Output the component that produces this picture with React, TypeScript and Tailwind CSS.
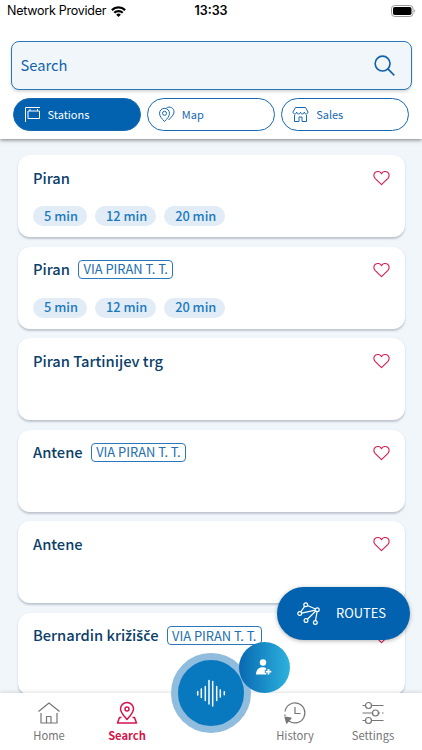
import React, { useState } from "react";
import clsx from "clsx";

type Station = {
  id: number;
  name: string;
  via?: string;
  arrivals?: string[];
};

const stations: Station[] = [
  { id: 1, name: "Piran", arrivals: ["5 min", "12 min", "20 min"] },
  {
    id: 2,
    name: "Piran",
    via: "VIA PIRAN T. T.",
    arrivals: ["5 min", "12 min", "20 min"],
  },
  { id: 3, name: "Piran Tartinijev trg" },
  { id: 4, name: "Antene", via: "VIA PIRAN T. T." },
  { id: 5, name: "Antene" },
  { id: 6, name: "Bernardin križišče", via: "VIA PIRAN T. T." },
];

function Icon({
  children,
  className,
  viewBox = "0 0 24 24",
  strokeWidth = 1.2,
}: {
  children: React.ReactNode;
  className?: string;
  viewBox?: string;
  strokeWidth?: number;
}) {
  return (
    <svg
      className={clsx("shrink-0", className)}
      viewBox={viewBox}
      fill="none"
      stroke="currentColor"
      strokeWidth={strokeWidth}
      strokeLinejoin="round"
    >
      {children}
    </svg>
  );
}

function StatusBar() {
  return (
    <div className="flex h-[22px] items-center px-[7px] font-['Inter',sans-serif] text-[12.5px] leading-[22px] text-black">
      <div className="flex flex-1 items-center gap-[5px]">
        <span className="whitespace-nowrap tracking-[-0.25px]">
          Network Provider
        </span>
        <svg className="h-[11px] w-[15px]" viewBox="0 0 15 11">
          <g fill="none" stroke="#000" strokeWidth="2.3">
            <path d="M0.9 4.1a9.4 9.4 0 0 1 13.2 0" />
            <path d="M3.3 6.8a6 6 0 0 1 8.4 0" />
          </g>
          <path d="M7.5 10.9 5.2 8.7a3.3 3.3 0 0 1 4.6 0z" />
        </svg>
      </div>
      <span className="font-semibold">13:33</span>
      <div className="flex flex-1 justify-end">
        <svg className="-mr-[1px] h-[12px] w-[25px]" viewBox="0 0 25 12">
          <rect x="0.5" y="0.5" width="21.5" height="11" rx="3.2" fill="none" stroke="#9a9a9a" />
          <rect x="2" y="2" width="18.5" height="8" rx="1.8" />
          <path d="M23.3 4.2c1.3.6 1.3 3 0 3.6z" fill="#9a9a9a" />
        </svg>
      </div>
    </div>
  );
}

function StationsIcon() {
  return (
    <Icon className="h-[17px] w-[17px]" viewBox="0 0 17 17" strokeWidth={1}>
      <path d="M1.5 16V1.5H16" />
      <path d="M4 5h11.5v7.5H4zM6 3v2M13.5 3v2" />
    </Icon>
  );
}

function MapIcon() {
  return (
    <Icon className="h-[17px] w-[17px]" viewBox="0 0 17 17" strokeWidth={1}>
      <path d="M6.5 15.5C4 12.8 1.500 10.300 1.500 7.300a5 5 0 0 1 10 0c0 3-2.500 5.500-5 8.200z" />
      <circle cx="6.5" cy="7.3" r="2" />
      <path d="M8.500 2c3-2.200 7.500-.3 7.500 3.800 0 2.800-2.500 5.300-5.500 8.200" />
    </Icon>
  );
}

function SalesIcon() {
  return (
    <Icon className="h-[17px] w-[17px]" viewBox="0 0 17 17" strokeWidth={1}>
      <path d="M3.5 1.5h10L16 6c0 2.600-3.700 2.600-3.700 0 0 2.600-3.800 2.600-3.800 0 0 2.600-3.800 2.600-3.800 0C4.700 8.600 1 8.600 1 6z" />
      <path d="M2.5 9v6.5H7V11h3v4.5h4.5V9" />
    </Icon>
  );
}

function StationName({ name }: { name: string }) {
  return (
    <span className="whitespace-pre text-[14.7px] font-medium text-[#0a4069]">
      {name.split(/([čšž]+)/).map((part, i) =>
        i % 2 ? (
          <span key={i} className="font-['Noto_Sans',sans-serif] text-[14px] font-semibold">
            {part}
          </span>
        ) : (
          part
        )
      )}
    </span>
  );
}

function StationCard({ station }: { station: Station }) {
  return (
    <div className="h-[82px] shrink-0 rounded-[12px] bg-white px-[15px] pt-[13px] shadow-[0_1.5px_2px_rgba(60,75,95,0.28)]">
      <div className="flex h-5 items-center">
        <StationName name={station.name} />
        {station.via && (
          <span className="ml-2 flex h-[19px] items-center rounded-[4px] border border-[#2a78ba] px-[4.5px] text-[12.9px] text-[#236fb2]">
            {station.via}
          </span>
        )}
        <Icon
          className="ml-auto h-4 w-[17px] text-[#d61f50]"
          viewBox="0 0 18 16"
        >
          <path d="M9 15 2.200 8.300C.3 6.300.6 3.300 2.500 1.900 4.500.5 7.500.9 9 3.400 10.500.9 13.500.5 15.500 1.900c1.900 1.400 2.200 4.400.3 6.400z" />
        </Icon>
      </div>
      {station.arrivals && (
        <div className="mt-[18px] flex gap-2">
          {station.arrivals.map((time) => (
            <span
              key={time}
              className="flex h-5 items-center rounded-full bg-[#e1ecf7] pl-[11px] pr-[9px] text-[12.8px] font-medium text-[#1a79bd]"
            >
              {time}
            </span>
          ))}
        </div>
      )}
    </div>
  );
}

function NavItem({
  label,
  active,
  children,
}: {
  label: string;
  active?: boolean;
  children: React.ReactNode;
}) {
  return (
    <button
      className={clsx(
        "flex w-[78px] flex-col items-center pt-2",
        active ? "font-bold text-[#d3164b]" : "text-[#757575]"
      )}
    >
      {children}
      <span className="mt-[1px] text-[11.2px] leading-[18px]">{label}</span>
    </button>
  );
}

export default function App() {
  const [tab, setTab] = useState("Stations");

  const tabs = [
    { label: "Stations", icon: <StationsIcon /> },
    { label: "Map", icon: <MapIcon /> },
    { label: "Sales", icon: <SalesIcon /> },
  ];

  return (
    <div className="relative flex h-[750px] w-[422px] flex-col overflow-hidden bg-[#f1f6fb] font-['Noto_Sans_CJK_SC',sans-serif] leading-none">
      {/* Header */}
      <header className="relative z-10 h-[139px] shrink-0 bg-white shadow-[0_1px_4px_rgba(0,0,0,0.5)]">
        <StatusBar />
        <div className="mx-[10.5px] mt-[19px] flex h-[49px] items-center justify-between rounded-[8px] border border-[#2976b8] bg-[#f1f6fb] pl-[9px] pr-[15.5px] text-[#1162aa] shadow-[0_2px_3px_rgba(0,0,0,0.15)]">
          <span className="text-[14.7px]">Search</span>
          <Icon className="h-[21px] w-[21px]" viewBox="0 0 22 22" strokeWidth={1.7}>
            <circle cx="9" cy="9" r="7.8" />
            <path d="M14.5 14.5 21.3 21.3" />
          </Icon>
        </div>
        <div className="mt-2 flex gap-[6px] px-[12.5px]">
          {tabs.map(({ label, icon }) => (
            <button
              key={label}
              onClick={() => setTab(label)}
              className={clsx(
                "flex h-[33px] flex-1 items-center gap-[7px] rounded-full border border-[#1668b0] pl-[10px] text-[11px]",
                tab === label ? "bg-[#0262b0] text-white" : "bg-white text-[#1668b0]"
              )}
            >
              {icon}
              {label}
            </button>
          ))}
        </div>
      </header>

      {/* Stations */}
      <main className="flex min-h-0 flex-1 flex-col gap-[9.6px] overflow-hidden pl-[18px] pr-[17px] pt-4">
        {stations.map((station) => (
          <StationCard key={station.id} station={station} />
        ))}
      </main>

      {/* Bottom navigation */}
      <nav className="relative z-10 flex h-[57px] shrink-0 justify-between bg-white px-[10px] shadow-[0_-1px_4px_rgba(0,0,0,0.12)]">
        <div className="flex">
          <NavItem label="Home">
            <Icon className="h-6 w-6">
              <path d="M1.500 10.500 12 2l10.500 8.500" />
              <path d="M4 12v10h16V12M9.500 22v-6.500h4.500V22" />
            </Icon>
          </NavItem>
          <NavItem label="Search" active>
            <Icon className="h-6 w-6" strokeWidth={1.5}>
              <path d="M12 18.500C9 15 5.500 11.400 5.500 8a6.500 6.500 0 0 1 13 0c0 3.400-3.500 7-6.500 10.500z" />
              <circle cx="12" cy="8" r="2" />
              <path d="M6.500 16.500h-2L2.500 22h19l-2-5.500h-2" />
            </Icon>
          </NavItem>
        </div>
        <div className="flex">
          <NavItem label="History">
            <Icon className="h-6 w-6">
              <path d="M2 10.500a10 10 0 1 1 4 9.500M1.900 13.500v1.500" />
              <path d="M12 6v6.500h5.500" />
              <path d="M2 16.200 8 17.200 3.700 22z" fill="currentColor" />
            </Icon>
          </NavItem>
          <NavItem label="Settings">
            <Icon className="h-6 w-6">
              <path d="M1.500 4.500h3M10.500 4.500h12M1.500 12h10M17.500 12h1.500M21 12h1.500M1.500 19.500h3M10.500 19.500h12" />
              <circle cx="7.5" cy="4.5" r="3" />
              <circle cx="14.5" cy="12" r="3" />
              <circle cx="7.5" cy="19.5" r="3" />
            </Icon>
          </NavItem>
        </div>
        <button className="absolute left-[171px] -top-[40px] flex h-20 w-20 items-center justify-center rounded-full border-[7px] border-[#90bcde] bg-[#0878bf] text-white">
          <Icon className="h-[30px] w-[30px]" viewBox="0 0 30 30" strokeWidth={1.5}>
            <path
              d="M1.700 13.500v3.500M5.300 11v8.500M9.300 8.500v14M13 2.500v23.500M16.700 3.500v24.500M20.700 8.500v14M24.300 12v7M28.300 13.700v3"
              strokeLinecap="round"
            />
          </Icon>
        </button>
        <button className="absolute left-[238.5px] -top-[51.5px] flex h-[51px] w-[51px] items-center justify-center rounded-full bg-linear-to-r from-[#0969b2] to-[#2eb2dd] text-white">
          <svg className="h-4 w-4" viewBox="0 0 16 16" fill="currentColor">
            <circle cx="7" cy="3.5" r="3.2" />
            <path d="M0 15.500C.2 10.500 3 8.300 6.500 8.300c1.600 0 2.600.3 3.600 1v1.500H8.800v3.300h1.500v1.400z" />
            <path d="M11.600 9.900h1.800v1.900h1.900v1.800h-1.900v1.900h-1.800v-1.900H9.700v-1.800h1.900z" />
          </svg>
        </button>
      </nav>

      {/* Routes button, floats over the list */}
      <button className="absolute left-[277px] top-[587px] flex h-[53px] w-[133px] items-center rounded-full bg-[#0262b0] pl-[20px] text-[12.9px] text-white shadow-[0_1px_4px_rgba(0,0,0,0.3)]">
        <Icon className="h-6 w-6">
          <circle cx="8.7" cy="2.8" r="1.9" />
          <circle cx="20.3" cy="7.8" r="1.9" />
          <circle cx="2.7" cy="11.5" r="1.9" />
          <circle cx="9" cy="18.5" r="1.9" />
          <circle cx="18.3" cy="20.5" r="1.9" />
          <path d="m10.500 3.500 8 3.500M18.400 8.200 4.600 11.100M3.800 9.900l3.800-5.500M18.800 9l-8.400 8.200M20.100 9.700l-1.600 8.900" />
        </Icon>
        <span className="ml-[15px]">ROUTES</span>
      </button>
    </div>
  );
}
